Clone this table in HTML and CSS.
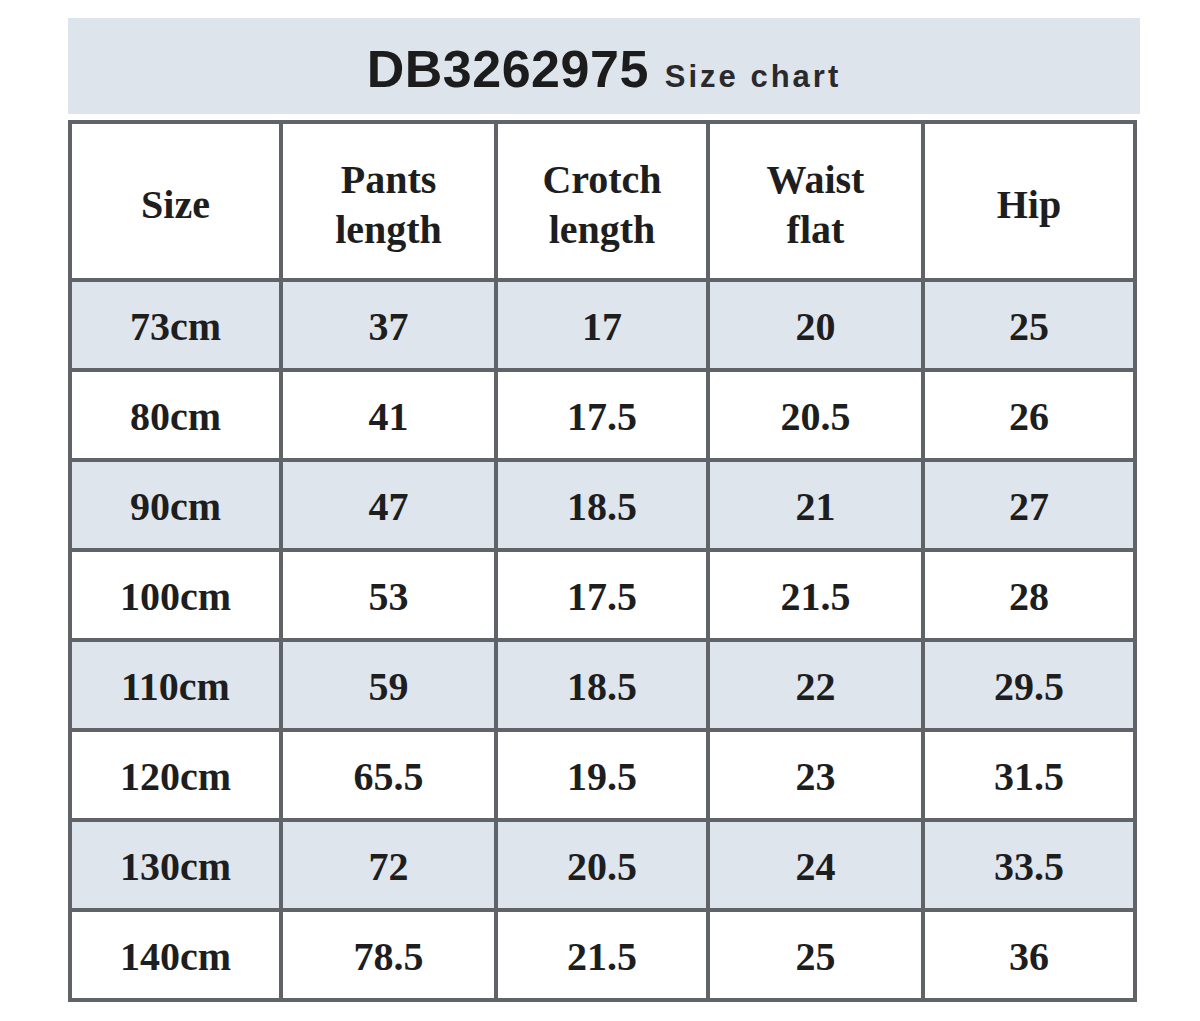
FILE: index.html
```html
<!DOCTYPE html>
<html lang="en">
<head>
<meta charset="utf-8">
<title>DB3262975 Size chart</title>
<link rel="stylesheet" href="styles.css">
</head>
<body>
<div class="page">
  <div class="banner">
    <span class="code">DB3262975</span>
    <span class="sub">Size chart</span>
  </div>
  <table class="chart">
    <colgroup>
      <col class="c1"><col class="c2"><col class="c3"><col class="c4"><col class="c5">
    </colgroup>
    <thead>
      <tr>
        <th>Size</th>
        <th>Pants<br>length</th>
        <th>Crotch<br>length</th>
        <th>Waist<br>flat</th>
        <th>Hip</th>
      </tr>
    </thead>
    <tbody>
      <tr class="alt"><td>73cm</td><td>37</td><td>17</td><td>20</td><td>25</td></tr>
      <tr><td>80cm</td><td>41</td><td>17.5</td><td>20.5</td><td>26</td></tr>
      <tr class="alt"><td>90cm</td><td>47</td><td>18.5</td><td>21</td><td>27</td></tr>
      <tr><td>100cm</td><td>53</td><td>17.5</td><td>21.5</td><td>28</td></tr>
      <tr class="alt"><td>110cm</td><td>59</td><td>18.5</td><td>22</td><td>29.5</td></tr>
      <tr><td>120cm</td><td>65.5</td><td>19.5</td><td>23</td><td>31.5</td></tr>
      <tr class="alt"><td>130cm</td><td>72</td><td>20.5</td><td>24</td><td>33.5</td></tr>
      <tr><td>140cm</td><td>78.5</td><td>21.5</td><td>25</td><td>36</td></tr>
    </tbody>
  </table>
</div>
</body>
</html>
```

FILE: styles.css
```css
html, body {
  margin: 0;
  padding: 0;
  background: #ffffff;
}

.page {
  padding: 18px 0 0 68px;
  width: 1072px;
}

.banner {
  box-sizing: border-box;
  height: 96px;
  width: 1072px;
  padding-top: 22px;
  background: #dde4ec;
  display: flex;
  justify-content: center;
  align-items: baseline;
  gap: 16px;
  font-family: "Liberation Sans", Arial, sans-serif;
  font-weight: bold;
  color: #1c1c1c;
  line-height: 58px;
}

.code {
  font-size: 52px;
  letter-spacing: 0.5px;
}

.sub {
  font-size: 31px;
  letter-spacing: 3px;
  color: #2a2a2a;
}

.chart {
  margin-top: 6px;
  border-collapse: separate;
  border-spacing: 0;
  border-left: 4px solid #606368;
  border-top: 4px solid #606368;
  table-layout: fixed;
  width: 1069px;
  font-family: "Liberation Serif", "Times New Roman", serif;
  font-weight: bold;
  font-size: 40px;
  color: #1e1e1e;
}

.c1 { width: 211px; }
.c2 { width: 215px; }
.c3 { width: 212px; }
.c4 { width: 215px; }
.c5 { width: 212px; }

.chart th,
.chart td {
  box-sizing: border-box;
  border-right: 4px solid #606368;
  border-bottom: 4px solid #606368;
  text-align: center;
  vertical-align: middle;
  padding: 0;
  font-weight: bold;
}

.chart th {
  height: 158px;
  padding-top: 8px;
  line-height: 50px;
  background: #ffffff;
}

.chart td {
  height: 90px;
  padding-top: 4px;
  line-height: 50px;
  background: #ffffff;
}

.chart tr.alt td {
  background: #dfe5ed;
}
```
